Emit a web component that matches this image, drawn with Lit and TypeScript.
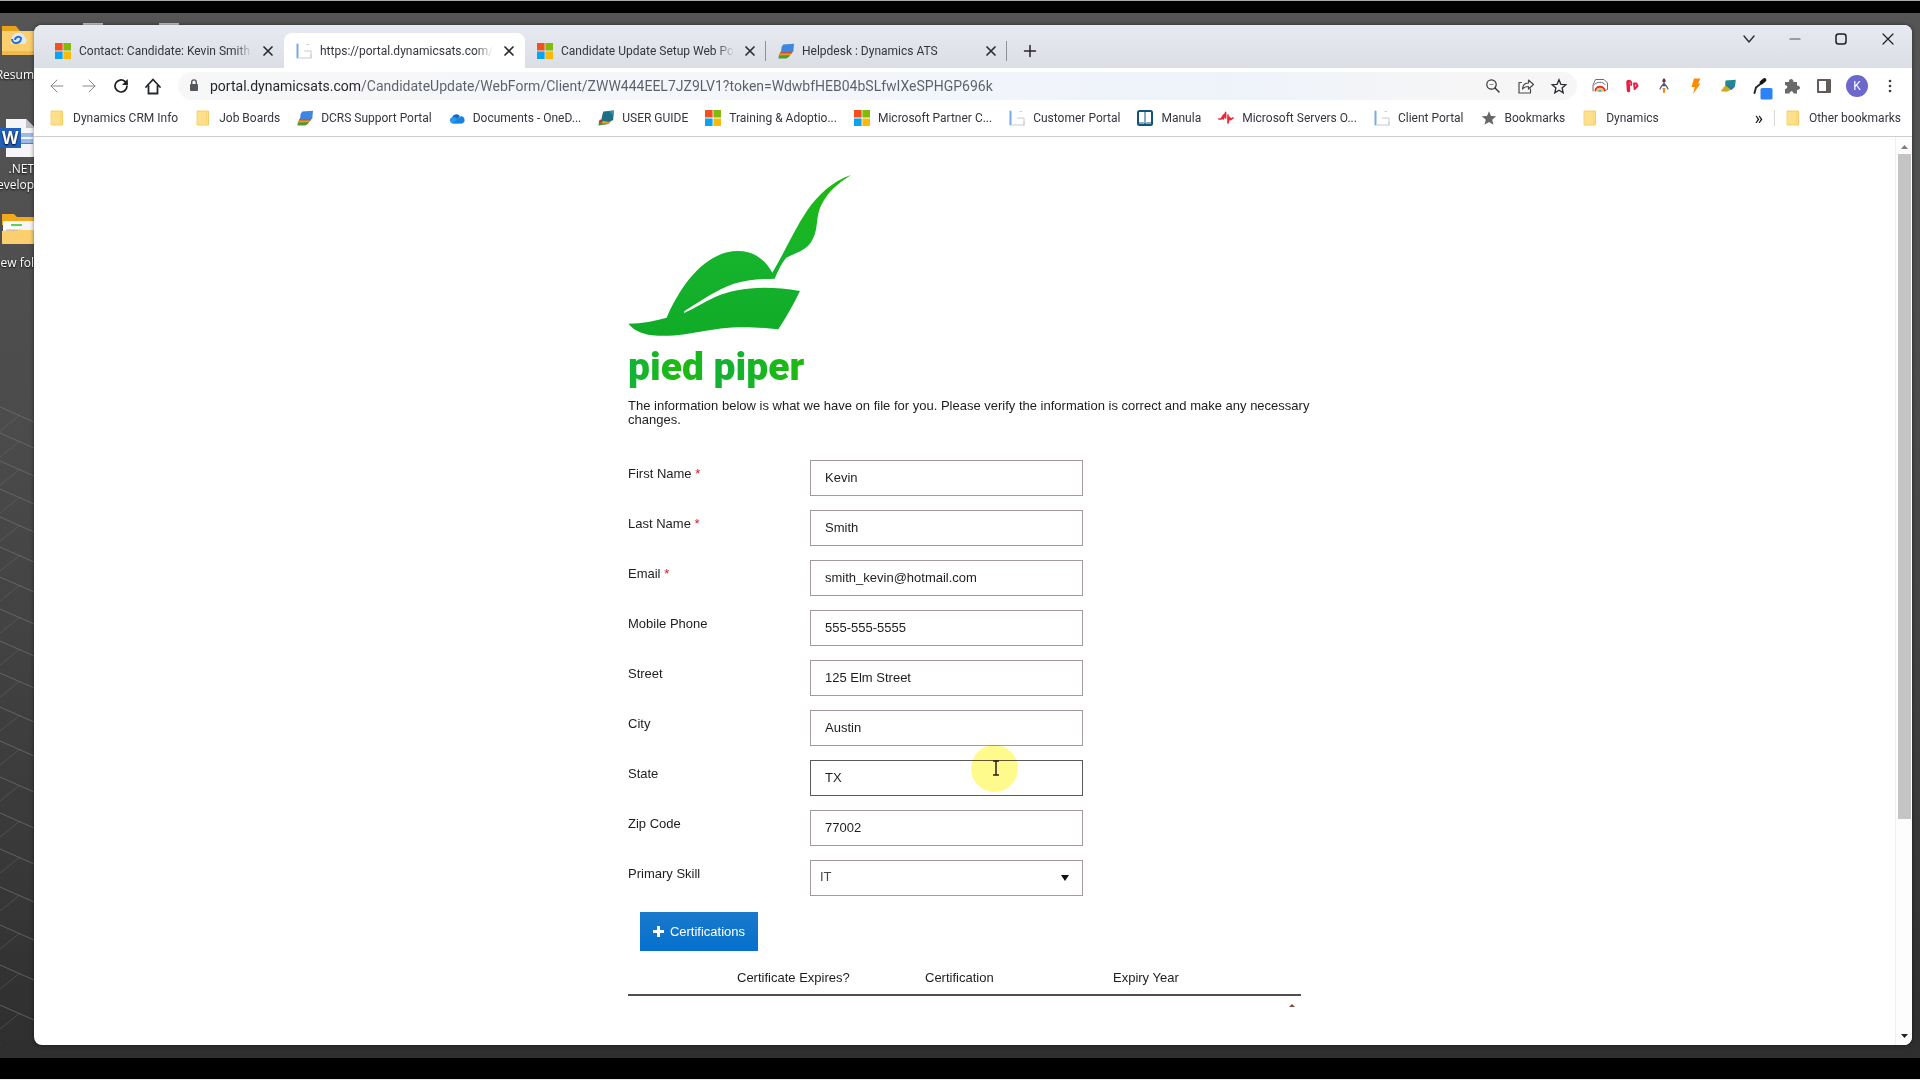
import { LitElement, html, svg, css, nothing } from "lit";
import { customElement } from "lit/decorators.js";

const icon = (body: unknown, box = "0 0 16 16", cls = "i16") =>
  html`<svg class=${cls} viewBox=${box} aria-hidden="true" fill="none" stroke-linecap="round" stroke-linejoin="round">${body}</svg>`;

const microsoft = icon(svg`<path fill="#f4501e" d="M0 0h7.6v7.6H0z"/><path fill="#82ba08" d="M8.4 0H16v7.6H8.4z"/><path fill="#0aa3ee" d="M0 8.4h7.6V16H0z"/><path fill="#fbb90b" d="M8.4 8.4H16V16H8.4z"/>`);
const layers = icon(svg`<path fill="#4f9a32" d="M.4 15.4 1 11.2l11.6-.8-1.4 3.4-3 1.6z"/><path fill="#f29a1d" d="m.9 12.4 1.4-3 12-.6-1.5 3.2z"/><path fill="#d94b22" d="m1.6 10.6 1.6-2.6 12.2-.4-1.8 3z"/><path fill="#3f86e0" d="M5.2 1.6 16 .8l-.8 8.2-12.2.4L3.6 4z"/>`);
const guide = icon(svg`<path fill="#4f8a3a" d="m.4 15.6 1-5 11 2-3 1.6z"/><path fill="#e3a52c" d="m3 13.6 2-3.2 8 1.2-1.4 1.8z"/><path fill="#c23c2a" d="m.6 12 1.6-2.6 3 .8-1.6 2.8z"/><path fill="#1c6f86" d="M5.4 1.6 15.8.6l-.6 9.4-4 2-8-1.6 1.2-6z"/><path fill="#2f93a5" d="M11 1l4.8-.4-.4 5.4z"/>`);
const folder = icon(svg`<path fill="#ffe08a" stroke="#f6cb62" d="M2.5 1h11v14h-11z"/><path stroke="#f9d57a" d="M11.5 1.6v12.8"/>`);
const cloud = icon(svg`<path fill="#0f6cc8" d="M3 8.5a4.4 4.4 0 0 1 8-2.3L6 12z"/><path fill="#2a98ee" d="M3.4 13.4A3.2 3.2 0 0 1 3 7.2 4 4 0 0 1 6.6 7.6l7.2 5.6z"/><path fill="#1583df" d="M8 9.5 11.4 6.4A3.6 3.6 0 0 1 13 13.4H3.4z"/>`);
const sheet = icon(svg`<path stroke="#79a9ea" stroke-width="2" d="M1.5 1.5v13"/><path stroke="#c6cad2" d="M3 15h12V8H8.500M15 12v3M11 1.500h1.500"/>`);
const manula = icon(svg`<rect x="1" y="1" width="14" height="14" rx="1.5" fill="#fff" stroke="#12557c" stroke-width="2"/><path stroke="#12557c" d="M8 2v10.5M2 13h4.5L8 14l1.5-1H14"/>`);
const pulse = icon(svg`<path stroke="#f02436" stroke-width="1.6" d="M.8 9h2.4l2.4-4-.4 4L7.6 2.4V8M10 5v8l1.6-5.6 1 2.2 2.4-1.6"/>`);
const starSolid = icon(svg`<path fill="#696664" d="m8 1.2 2 4.8 5.2.3-4 3.4 1.3 5L8 12l-4.5 2.7 1.3-5-4-3.4L6 6z"/>`);
const close = icon(svg`<path stroke="#2b2d30" stroke-width="1.7" d="m4 4 8 8M12 4l-8 8"/>`);

const TABS = [
  { icon: microsoft, title: "Contact: Candidate: Kevin Smith", active: false },
  { icon: sheet, title: "https://portal.dynamicsats.com/C", active: true },
  { icon: microsoft, title: "Candidate Update Setup Web Po", active: false },
  { icon: layers, title: "Helpdesk : Dynamics ATS", active: false },
];

const BOOKMARKS = [
  [folder, "Dynamics CRM Info"],
  [folder, "Job Boards"],
  [layers, "DCRS Support Portal"],
  [cloud, "Documents - OneD..."],
  [guide, "USER GUIDE"],
  [microsoft, "Training & Adoptio..."],
  [microsoft, "Microsoft Partner C..."],
  [sheet, "Customer Portal"],
  [manula, "Manula"],
  [pulse, "Microsoft Servers O..."],
  [sheet, "Client Portal"],
  [starSolid, "Bookmarks"],
  [folder, "Dynamics"],
] as const;

const FIELDS = [
  { id: "first", label: "First Name", value: "Kevin", required: true },
  { id: "last", label: "Last Name", value: "Smith", required: true },
  { id: "email", label: "Email", value: "smith_kevin@hotmail.com", required: true },
  { id: "mobile", label: "Mobile Phone", value: "555-555-5555", required: false },
  { id: "street", label: "Street", value: "125 Elm Street", required: false },
  { id: "city", label: "City", value: "Austin", required: false },
  { id: "state", label: "State", value: "TX", required: false },
  { id: "zip", label: "Zip Code", value: "77002", required: false },
];

const base = css`
  * { box-sizing: border-box; }
  svg { display: block; flex: none; overflow: visible; }
  .i16 { width: 16px; height: 16px; }
  button { appearance: none; border: 0; padding: 0; margin: 0; background: none; font: inherit; color: inherit; display: flex; align-items: center; justify-content: center; }
  a { color: inherit; text-decoration: none; }
`;

@customElement("desktop-icons")
export class DesktopIcons extends LitElement {
  static styles = [base, css`
    :host { display: block; position: relative; overflow: hidden; font: 12px/16px "Open Sans", sans-serif; color: #fff; }
    .lines { position: absolute; left: 0; bottom: 0; width: 34px; height: 640px; }
    .list { position: relative; display: flex; flex-direction: column; align-items: flex-end; margin: 0; padding: 12px 0 0; list-style: none; }
    .item { height: 94px; display: flex; flex-direction: column; align-items: flex-end; gap: 8px; white-space: nowrap; text-align: right; text-shadow: 0 1px 2px #000; }
    .item.doc { gap: 4px; }
    .letter { font: 700 17px "Open Sans", sans-serif; fill: #fff; }
  `];
  render() {
    const rows = Array.from({ length: 20 }, (_, i) => Math.round(i * 26 + i * i * 0.4));
    return html`
      <svg class="lines" viewBox="0 0 34 640" aria-hidden="true" fill="none">
        ${rows.map((y) => svg`<path stroke="#77706e" stroke-opacity=".7" d=${`M0 ${y + 2}l34 15`}/><path stroke="#77706e" stroke-opacity=".4" d=${`M0 ${y + 26}l20-16`}/>`)}
      </svg>
      <ul class="list">
        <li class="item">
          <svg width="34" height="34" viewBox="0 0 34 34" aria-hidden="true"><path fill="#e9a01b" d="M2 1h14l4 5h14v10H2z"/><path fill="#fbcf6d" d="M2 6h32v24H2z"/><path fill="#f2b94e" d="M2 26h32v4H2z"/><path fill="#dfe9f6" d="M11 15c1-6 7-9 12-6l4 6-2 4H11z"/><path stroke="#2770cf" stroke-width="2" fill="none" d="M12 14c0 6 9 5 9-1-3-3-6 0-6 2"/></svg>
          <span>Resum</span>
        </li>
        <li class="item doc">
          <svg width="34" height="38" viewBox="0 0 34 38" aria-hidden="true"><path fill="#f6f6f8" d="M6 0h20l8 8v30H6z"/><path fill="#bfc0c6" d="M26 0v9h8z"/><path fill="#9cbbe6" d="M21 14h12v4H21zM21 20h12v4H21z"/><path fill="#6580a8" d="M21 24h12v1H21z"/><path fill="#2160bb" d="M0 9h21v20H0z"/><text class="letter" x="2" y="25">W</text></svg>
          <span>.NET<br />evelop</span>
        </li>
        <li class="item">
          <svg width="34" height="34" viewBox="0 0 34 34" aria-hidden="true"><path fill="#f5a81c" d="M2 1h12l3 3h17v8H2z"/><path fill="#f4f6f9" d="M3 8h31v12H3z"/><path fill="#fbcf6d" d="m2 18 18-2 2 1h12v14H2z"/><path fill="#fff" d="M3 9h16v8H3z"/><path stroke="#57d84f" stroke-width="2" d="M11 12h11"/><path stroke="#b5b2c4" d="M6 17h12"/></svg>
          <span>ew fol</span>
        </li>
      </ul>`;
  }
}

@customElement("tab-strip")
export class TabStrip extends LitElement {
  static styles = [base, css`
    :host { display: block; background: linear-gradient(#e7eaf0, #dbdee4); font: 12px/16px Roboto, sans-serif; color: #33363b; }
    .strip { display: flex; height: 43px; padding-left: 9px; }
    .tabs { display: flex; padding-top: 8px; }
    .tab { width: 241px; height: 35px; display: flex; align-items: center; gap: 8px; padding: 0 8px 0 12px; position: relative; }
    .tab.active { background: #fff; border-radius: 8px 8px 0 0; }
    .tab.divided::after { content: ""; position: absolute; right: 0; top: 8px; height: 20px; width: 1px; background: #8d9095; }
    .title { flex: 1; overflow: hidden; white-space: nowrap; mask-image: linear-gradient(90deg, #000 90%, transparent); }
    .add { width: 28px; height: 35px; margin: 8px 0 0 9px; }
    .controls { display: flex; margin-left: auto; height: 28px; }
    .controls button { width: 46px; }
    .controls button:last-child { width: 48px; }
  `];
  render() {
    return html`<div class="strip">
      <div class="tabs">
        ${TABS.map((t, i) => html`<div class="tab ${t.active ? "active" : ""} ${i > 1 ? "divided" : ""}">
          ${t.icon}<a class="title" href="#">${t.title}</a><button aria-label="Close tab">${close}</button>
        </div>`)}
      </div>
      <button class="add" aria-label="New tab">${icon(svg`<path stroke="#2b2226" stroke-width="1.5" d="M8 2.5v11M2.5 8h11"/>`)}</button>
      <div class="controls">
        <button aria-label="Search tabs">${icon(svg`<path stroke="#2d2f33" stroke-width="1.4" d="m3 5 5 6 5-6"/>`)}</button>
        <button aria-label="Minimise">${icon(svg`<path stroke="#55504e" stroke-width="1.2" d="M3 8h10"/>`)}</button>
        <button aria-label="Restore">${icon(svg`<rect x="3" y="3" width="10" height="10" rx="2.5" stroke="#1d1f22" stroke-width="1.5"/>`)}</button>
        <button aria-label="Close window">${icon(svg`<path stroke="#1d1f22" stroke-width="1.2" d="m3 3 10 10M13 3 3 13"/>`)}</button>
      </div>
    </div>`;
  }
}

@customElement("address-bar")
export class AddressBar extends LitElement {
  static styles = [base, css`
    :host { display: block; background: #fff; font: 14px/20px Roboto, sans-serif; }
    .bar { display: flex; align-items: center; height: 36px; padding: 0 6px 0 7px; }
    .bar > button { width: 32px; height: 32px; }
    .bar > .profile { width: 34px; }
    .omni { flex: 1; display: flex; align-items: center; height: 28px; margin: 0 7px 0 9px; padding: 0 2px 0 9px; border-radius: 14px; background: linear-gradient(90deg, #f7f7f8, #f4f6fa 45%, #eef3fa 75%, #f6f6f7 92%); }
    .url { flex: 1; min-width: 0; margin-left: 7px; border: 0; padding: 0; outline: 0; font: inherit; color: transparent; background: linear-gradient(90deg, #222428 150px, #5a5f6b 150px); background-clip: text; -webkit-background-clip: text; }
    .omni button { width: 33px; height: 28px; }
    .me { width: 22px; height: 22px; border-radius: 50%; background: #6d68cb; color: #fff; font-size: 12px; display: grid; place-items: center; }
  `];
  render() {
    const g = "#4c4a49";
    return html`<div class="bar">
      <button aria-label="Back">${icon(svg`<path stroke="#87898c" d="M14 8H2M8 2 2 8l6 6"/>`)}</button>
      <button aria-label="Forward">${icon(svg`<path stroke="#87898c" d="M2 8h12M8 2l6 6-6 6"/>`)}</button>
      <button aria-label="Reload">${icon(svg`<path stroke="#1f1f22" stroke-width="1.7" d="M14 8a6 6 0 1 1-2-4.5L14 5.5"/><path fill="#1f1f22" d="M14.8 1v6H9z"/>`)}</button>
      <button aria-label="Home">${icon(svg`<path stroke="#26282b" stroke-width="1.8" stroke-linejoin="miter" d="M1 9 8 1.5 15 9M3.500 8v7.500h9V8"/>`)}</button>
      <div class="omni">
        ${icon(svg`<rect x="3" y="6" width="8" height="7" rx="1" fill="#55565b"/><path stroke="#55565b" stroke-width="1.4" d="M4.7 6V4.2a2.3 2.3 0 0 1 4.6 0V6"/>`)}
        <input class="url" aria-label="Address" .value=${"portal.dynamicsats.com/CandidateUpdate/WebForm/Client/ZWW444EEL7JZ9LV1?token=WdwbfHEB04bSLfwIXeSPHGP696k"} />
        <button aria-label="Zoom">${icon(svg`<circle cx="6.5" cy="6.5" r="4.7" stroke="#333539" stroke-width="1.2"/><path stroke="#333539" stroke-width="1.5" d="m10 10 4 4"/><path stroke="#8a8c90" d="M5 6.5h3"/>`)}</button>
        <button aria-label="Share">${icon(svg`<path stroke=${g} stroke-width="1.2" d="M3.500 4.500H1v10.500h11.500v-4M4.500 11c.3-4 2.500-6 6-6V2l5 4.500-5 4.500V8.500c-2.800 0-4.600.7-6 2.500z"/>`)}</button>
        <button aria-label="Bookmark this page">${icon(svg`<path stroke="#2b2d30" stroke-width="1.3" stroke-linejoin="miter" d="m8 1.7 1.900 4.600 4.900.4-3.700 3.200 1.100 4.900L8 12.200l-4.200 2.600 1.100-4.900L1.200 6.700l4.900-.4z"/>`)}</button>
      </div>
      <button aria-label="Rainbow extension">${icon(svg`<path stroke="#6f7074" d="M1 13V7l2.500-5.500H12l3.500 3.500v6.500l-2.500 1M2.500 6.500C5 3.500 11 3.500 13 6.500"/><path stroke="#e1332d" stroke-width="2" d="M3.500 12.500c0-5 9-5 9 0"/><path stroke="#f4c430" stroke-width="1.3" d="M5.500 13c0-3 5-3 5 0"/><path stroke="#3aa0e8" stroke-width="1.3" d="M7 13.500c0-1.500 2-1.500 2 0"/>`)}</button>
      <button aria-label="Recorder extension">${icon(svg`<path stroke="#e71d45" stroke-width="3.5" d="m4 4 .5 8.500"/><path stroke="#e71d45" stroke-width="1.900" d="M4 3c3-1 4 2 3 4M10 5.500l.6 5.500 3-3-1.300-2.500z"/>`)}</button>
      <button aria-label="Rocket extension">${icon(svg`<path fill="#6e2836" d="M6.500 2 8 0l1.500 2v2h-3z"/><path stroke="#4c4e7d" stroke-width="1.2" d="M8 4v4M8 5.500 5 9M8 5.500 11 9M5 9l-1 2M11 9l1 2"/><path fill="#ef8b23" d="M6.500 10h3L8.800 15H7.200z"/>`)}</button>
      <button aria-label="Lightning extension">${icon(svg`<path fill="#fb8b04" d="M6 .5h6.500L10 5.500h2.500L5 16l1.800-7H3.500z"/>`)}</button>
      <button aria-label="Layers extension">${icon(svg`<path fill="#1f8a94" d="m5.500 2.500 10.300-.8-.8 7-10 1z"/><path fill="#d3a81c" d="m.6 13.300 5-6.300 5 5-4 1.700z"/><path fill="#35729e" d="m5.500 7 9.500 1.700-4 3.500z"/>`)}</button>
      <button aria-label="Colour picker extension">${icon(svg`<path stroke="#27272b" stroke-width="2" d="M2.500 15 4 9.500l5-4"/><path stroke="#17171a" stroke-width="3.800" d="m9.500 4.500 3-2.500"/><rect x="8.500" y="10" width="12" height="11.500" rx="1.500" fill="#2c83f6"/>`)}</button>
      <button aria-label="Extensions">${icon(svg`<path fill="#6b6a69" d="M1 4h4c-.5-4 4.500-4 4.500 0H13v3.500c4 .5 4 4 0 4.500v3.500H9.500c-.5-3-3.500-3-4 0H1V11c3-.5 3-3.500 0-4z"/>`)}</button>
      <button aria-label="Side panel">${icon(svg`<rect x="2" y="2" width="12" height="12" stroke="#615c5a" stroke-width="2"/><path fill="#615c5a" d="M10 2h4v12h-4z"/>`)}</button>
      <button class="profile" aria-label="Profile"><span class="me">K</span></button>
      <button aria-label="Menu">${icon(svg`<g fill="#3c3c3f"><circle cx="8" cy="3" r="1.3"/><circle cx="8" cy="8" r="1.3"/><circle cx="8" cy="13" r="1.3"/></g>`)}</button>
    </div>`;
  }
}

@customElement("bookmark-bar")
export class BookmarkBar extends LitElement {
  static styles = [base, css`
    :host { display: block; background: #fff; border-bottom: 1px solid #cfcccc; font: 12px/16px Roboto, sans-serif; color: #34363d; }
    .bar { display: flex; align-items: center; gap: 17px; height: 32px; padding: 0 11px 4px 15px; white-space: nowrap; }
    .mark { display: flex; align-items: center; gap: 8px; }
    .more { margin-left: auto; font-size: 18px; color: #17181c; }
    .other { border-left: 1px solid #d8d8dc; padding-left: 10px; margin-left: -6px; }
  `];
  render() {
    return html`<nav class="bar" aria-label="Bookmarks">
      ${BOOKMARKS.map(([i, name]) => html`<a class="mark" href="#">${i}<span>${name}</span></a>`)}
      <button class="more" aria-label="More bookmarks">»</button>
      <a class="mark other" href="#">${folder}<span>Other bookmarks</span></a>
    </nav>`;
  }
}

@customElement("candidate-form")
export class CandidateForm extends LitElement {
  static styles = [base, css`
    :host { display: block; width: 673px; max-width: 100%; margin: 0 auto; padding-top: 37px; font: 13px/14px "Liberation Sans", Arial, sans-serif; color: #1d1d22; }
    .hat { width: 226px; height: 163px; }
    .brand { margin: 8px 0 0; font: 900 39px/44px Roboto, sans-serif; color: #17b723; background: linear-gradient(90deg, #12b33a, #1dbb0e 8%, #12b036 14%, #1cba10 24%); background-clip: text; -webkit-background-clip: text; -webkit-text-fill-color: transparent; }
    .intro { margin: 10px 0 33px; white-space: nowrap; }
    .fields { display: grid; grid-template-columns: 182px 273px; row-gap: 14px; }
    .label { line-height: 28px; }
    .req { color: #d3122a; }
    .box { width: 100%; height: 36px; margin: 0; padding: 0 14px 2px; border: 1px solid #a39b9b; border-radius: 0; background: #fff; font: inherit; color: #1d1d22; }
    .box.hover { border-color: #5e585c; }
    .holder { position: relative; display: block; }
    select.box { appearance: none; padding: 0 9px 2px; color: #4a4348; }
    .caret { position: absolute; right: 14px; top: 15px; width: 8px; height: 6px; pointer-events: none; }
    .glow { position: absolute; left: 161px; top: -15px; width: 47px; height: 47px; border-radius: 50%; background: #fffa8c; mix-blend-mode: multiply; }
    .beam { position: absolute; left: 182px; top: 0; width: 8px; height: 16px; }
    .add { width: 118px; height: 39px; margin: 16px 0 17px 12px; gap: 6px; background: linear-gradient(#1a79cc, #0570cd); color: #fff; }
    table { width: 100%; border-collapse: collapse; table-layout: fixed; }
    .first { width: 109px; }
    th { padding: 0; height: 27px; font-weight: 400; text-align: left; vertical-align: top; line-height: 20px; border-bottom: 2px solid #544c50; }
    .up { display: block; margin: 8px 6px 0 auto; }
  `];
  render() {
    return html`
      <svg class="hat" viewBox="85 72 678 489" role="img" aria-label="Pied Piper hat logo">
        <defs><linearGradient id="g" x1="0" y1="0" x2="0" y2="1"><stop offset="0" stop-color="#1fba0c"/><stop offset=".5" stop-color="#16b32d"/><stop offset="1" stop-color="#10ac28"/></linearGradient></defs>
        <path fill="url(#g)" d="M754 75C700 92 655 135 622 182C583 240 553 310 518 368C492 322 457 303 415 303C318 303 243 405 201 503C165 513 128 520 86 521C104 543 132 555 175 557C300 561 340 515 536 538C561 500 582 462 601 423C495 405 410 413 345 442C313 456 287 475 255 488C252 489 252 485 256 482C315 446 350 420 400 402C440 389 480 387 525 386C535 363 545 340 559 324C580 310 612 306 633 278C660 238 645 205 665 165C685 125 715 100 754 75Z"/>
      </svg>
      <p class="brand">pied piper</p>
      <p class="intro">The information below is what we have on file for you. Please verify the information is correct and make any necessary<br />changes.</p>
      <form class="fields">
        ${FIELDS.map((f) => html`
          <label class="label" for=${f.id}>${f.label}${f.required ? html` <span class="req">*</span>` : nothing}</label>
          <span class="holder">
            <input class="box ${f.id === "state" ? "hover" : ""}" id=${f.id} type="text" .value=${f.value} />
            ${f.id === "state" ? html`<span class="glow"></span><svg class="beam" viewBox="0 0 8 16" aria-hidden="true"><path fill="none" stroke="#2a1c1c" stroke-width="1.5" d="M1 1h6M4 1v14M1 15h6"/></svg>` : nothing}
          </span>`)}
        <label class="label" for="skill">Primary Skill</label>
        <span class="holder">
          <select class="box" id="skill"><option>IT</option></select>
          <svg class="caret" viewBox="0 0 8 6" aria-hidden="true"><path fill="#111" d="M0 0h8L4 6z"/></svg>
        </span>
      </form>
      <button class="add"><svg width="11" height="11" viewBox="0 0 11 11" aria-hidden="true"><path stroke="#fff" stroke-width="3" d="M5.5 0v11M0 5.5h11"/></svg>Certifications</button>
      <table>
        <thead><tr><th class="first"></th><th>Certificate Expires?</th><th>Certification</th><th>Expiry Year</th></tr></thead>
      </table>
      <svg class="up" width="6" height="4" viewBox="0 0 6 4" aria-hidden="true"><path fill="#7d4a44" d="M0 3 3 0l3 3z"/></svg>`;
  }
}

@customElement("app-root")
export class AppRoot extends LitElement {
  static styles = [base, css`
    :host { display: flex; flex-direction: column; min-height: 100vh; box-sizing: border-box; background: #000; border-top: 1px solid #a8adab; border-bottom: 1px solid #e8e8e8; padding: 12px 0 21px; }
    .desk { flex: 1; position: relative; display: grid; grid-template-columns: 34px 1fr; padding: 0 8px 13px 0; background: linear-gradient(#555556, #4b4b4c 40%, #39393a 80%, #2e2e2f); }
    .peek { position: absolute; top: 10px; width: 20px; height: 2px; background: #c9c9cc; }
    .peek.one { left: 83px; }
    .peek.two { left: 159px; }
    .win { position: relative; margin-top: 12px; display: flex; flex-direction: column; min-width: 0; border-radius: 8px; overflow: hidden; background: #fff; box-shadow: 0 0 4px rgba(0, 0, 0, 0.5); }
    .view { flex: 1; display: grid; grid-template-columns: 1fr 17px; }
    .scroll { display: flex; flex-direction: column; align-items: center; padding: 8px 0 7px; border-left: 1px solid #f0f0f0; background: #fdfdfd; }
    .track { flex: 1; width: 13px; margin: 5px 0; }
    .thumb { height: 76%; background: #c5c4c4; }
  `];
  render() {
    return html`
      <div class="desk">
        <span class="peek one"></span><span class="peek two"></span>
        <desktop-icons></desktop-icons>
        <main class="win">
          <tab-strip></tab-strip>
          <address-bar></address-bar>
          <bookmark-bar></bookmark-bar>
          <div class="view">
            <candidate-form></candidate-form>
            <div class="scroll">
              <svg width="7" height="4" viewBox="0 0 7 4" aria-hidden="true"><path fill="#8a7a72" d="M0 4 3.5 0 7 4z"/></svg>
              <div class="track"><div class="thumb"></div></div>
              <svg width="7" height="4" viewBox="0 0 7 4" aria-hidden="true"><path fill="#2a1c20" d="M0 0h7L3.5 4z"/></svg>
            </div>
          </div>
        </main>
      </div>`;
  }
}
